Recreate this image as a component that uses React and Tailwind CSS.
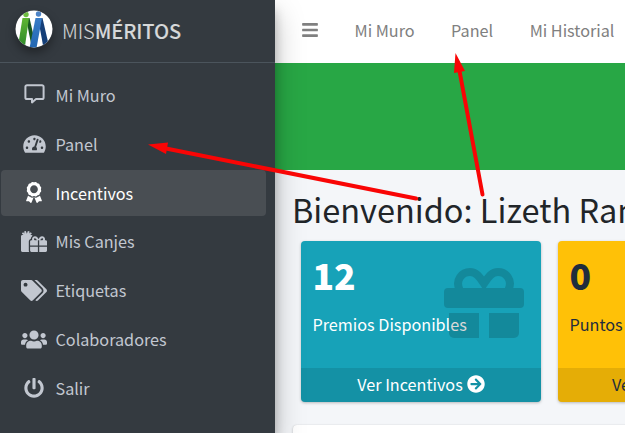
import React from "react";
import {
  FaArrowCircleRight,
  FaAward,
  FaBars,
  FaGifts,
  FaPowerOff,
  FaTachometerAlt,
  FaTags,
  FaUsers,
} from "react-icons/fa";

function MessageIcon() {
  return (
    <svg width="21" height="21" viewBox="0 0 21 21" fill="none" stroke="currentColor" strokeWidth="2" strokeLinejoin="round">
      <path d="M3 1.2h15a1.6 1.6 0 0 1 1.6 1.6v10.6a1.6 1.6 0 0 1-1.6 1.6h-6L8 18.4V15H3a1.6 1.6 0 0 1-1.6-1.6V2.8A1.6 1.6 0 0 1 3 1.2Z" />
    </svg>
  );
}

function GiftIcon() {
  return (
    <svg className="text-black opacity-15" width="80" height="70" viewBox="0 0 80 70" fill="currentColor">
      <path d="M15.500 21.500C11 12 18 4 26 4c6 0 9 4 14 11.500C45 8 48 4 54 4c8 0 15 8 10.500 17.500" fill="none" stroke="currentColor" strokeWidth="8" />
      <path d="M4 20h72a4 4 0 0 1 4 4v12a4 4 0 0 1-4 4H4a4 4 0 0 1-4-4V24a4 4 0 0 1 4-4Z" />
      <path d="M5 45h30v25H10a5 5 0 0 1-5-5Z" />
      <path d="M45 45h30v20a5 5 0 0 1-5 5H45Z" />
    </svg>
  );
}

function Logo() {
  return (
    <svg className="rounded-full shadow-[0_5px_10px_rgba(0,0,0,0.35)]" width="38" height="38" viewBox="0 0 38 38">
      <defs>
        <linearGradient id="green" x1="0" y1="0" x2="0" y2="1">
          <stop offset="0" stopColor="#5fb532" />
          <stop offset="1" stopColor="#2f8a2b" />
        </linearGradient>
        <linearGradient id="blue" x1="0" y1="0" x2="0" y2="1">
          <stop offset="0" stopColor="#397cc6" />
          <stop offset="1" stopColor="#2267b2" />
        </linearGradient>
        <clipPath id="disc">
          <circle cx="19" cy="19" r="18.500" />
        </clipPath>
      </defs>
      <circle cx="19" cy="19" r="18.500" fill="#fff" />
      <g clipPath="url(#disc)">
        <path d="M11 8h3.500l6 26-4 2Z" fill="#17551f" />
        <path d="M7.500 8H14L10 36H3Z" fill="url(#green)" />
        <path d="M23 8h4.500l6 26-5 4Z" fill="#153f78" />
        <path d="M20.500 8H27l-5.500 30h-7Z" fill="url(#blue)" />
        <circle cx="11" cy="4.500" r="2.700" fill="#6fbd42" />
        <circle cx="23.500" cy="4" r="2.700" fill="#4d83c6" />
      </g>
    </svg>
  );
}

const menu = [
  { label: "Mi Muro", icon: <MessageIcon /> },
  { label: "Panel", icon: <FaTachometerAlt className="h-5 w-[23px]" /> },
  { label: "Incentivos", icon: <FaAward className="h-[21px] w-4" />, active: true },
  { label: "Mis Canjes", icon: <FaGifts className="h-[21px] w-[26px]" /> },
  { label: "Etiquetas", icon: <FaTags className="h-[21px] w-[26px]" /> },
  { label: "Colaboradores", icon: <FaUsers className="h-[21px] w-[26px]" /> },
  { label: "Salir", icon: <FaPowerOff className="h-5 w-5" /> },
];

function Sidebar() {
  return (
    <aside className="relative z-10 h-full w-[275px] shrink-0 bg-[#343a40] text-[#c2c7d0] shadow-[0_14px_28px_rgba(0,0,0,0.25),0_10px_10px_rgba(0,0,0,0.22)]">
      <div className="flex h-[63px] items-center border-b border-[#4b545c] pl-[15px]">
        <div className="-mt-1">
          <Logo />
        </div>
        <span className="ml-[9px] text-[20.100px] leading-none tracking-[-0.1px] text-white/80">
          <span className="font-light">MIS</span>
          <span className="font-medium">MÉRITOS</span>
        </span>
      </div>
      <nav className="mt-[9.400px] flex flex-col gap-[2.900px] pl-px">
        {menu.map((item) => (
          <a
            key={item.label}
            className={
              item.active
                ? "flex h-[46px] w-[265px] items-center rounded-[4px] bg-[#494e53] pl-[18px] text-white"
                : "flex h-[46px] w-[265px] items-center pl-[18px]"
            }
          >
            <span className="flex w-[30px] justify-center pb-px">{item.icon}</span>
            <span className="ml-[6.500px] pb-px text-[16.200px] leading-none">{item.label}</span>
          </a>
        ))}
      </nav>
    </aside>
  );
}

function StatCard({ value, label, action, icon, tone }) {
  return (
    <div className={"relative flex h-[161px] w-[240px] shrink-0 flex-col overflow-hidden rounded-[4px] shadow-[0_1px_3px_rgba(0,0,0,0.25)] " + tone}>
      <div className="flex-1 whitespace-nowrap pl-[11.500px]">
        <div className="pt-[14px] text-[35.500px] font-black leading-[40px]">{value}</div>
        <div className="mt-[19px] text-[16.200px] leading-[20px]">{label}</div>
      </div>
      <div className="flex h-[34px] items-center justify-center gap-1 whitespace-nowrap bg-black/10 pb-[2px] text-[16.200px] leading-none">
        {action}
        <FaArrowCircleRight className="h-[18px] w-[18px]" />
      </div>
      {icon && <div className="absolute left-[143px] top-[27px]">{icon}</div>}
    </div>
  );
}

function Arrows() {
  return (
    <svg className="pointer-events-none absolute inset-0 z-20" width="625" height="433" viewBox="0 0 625 433">
      <g stroke="#f90505" strokeWidth="4" strokeLinecap="round">
        <path d="M416 198.500 166 148.500" />
        <path d="M482.500 194.500 459.500 71" />
      </g>
      <g fill="#f90505">
        <path d="M148 144.500 168 142.500 166 154Z" />
        <path d="M455.500 53 465 71 454 73Z" />
      </g>
    </svg>
  );
}

export default function App() {
  return (
    <div className="relative flex h-[433px] w-[625px] overflow-hidden bg-[#f4f6f9] font-['Noto_Sans_CJK_SC',sans-serif] text-[#212529]">
      <Sidebar />
      <main className="min-w-0 flex-1">
        <header className="flex h-[63px] items-center whitespace-nowrap bg-white pb-[3px] pl-[27px] text-[16.200px] leading-none text-[#808080]">
          <FaBars className="h-[18px] w-4" />
          <span className="ml-[36.500px]">Mi Muro</span>
          <span className="ml-[36.500px]">Panel</span>
          <span className="ml-[36.500px]">Mi Historial</span>
        </header>
        <div className="h-[107px] bg-[#28a745]" />
        <h1 className="h-[71px] whitespace-nowrap pl-[17px] pt-[18px] text-[32.500px] leading-[42px]">
          Bienvenido: Lizeth Ramírez
        </h1>
        <section className="flex gap-[17px] pl-[26px]">
          <StatCard value="12" label="Premios Disponibles" action="Ver Incentivos" icon={<GiftIcon />} tone="bg-[#17a2b8] text-white" />
          <StatCard value="0" label="Puntos" action="Ver Mis Puntos" tone="bg-[#ffc107] text-[#1f2d3d]" />
        </section>
        <div className="ml-[18px] mt-[23px] h-[40px] w-[400px] rounded-[4px] bg-white shadow-[0_0_1px_rgba(0,0,0,0.125),0_1px_3px_rgba(0,0,0,0.2)]" />
      </main>
      <Arrows />
    </div>
  );
}
